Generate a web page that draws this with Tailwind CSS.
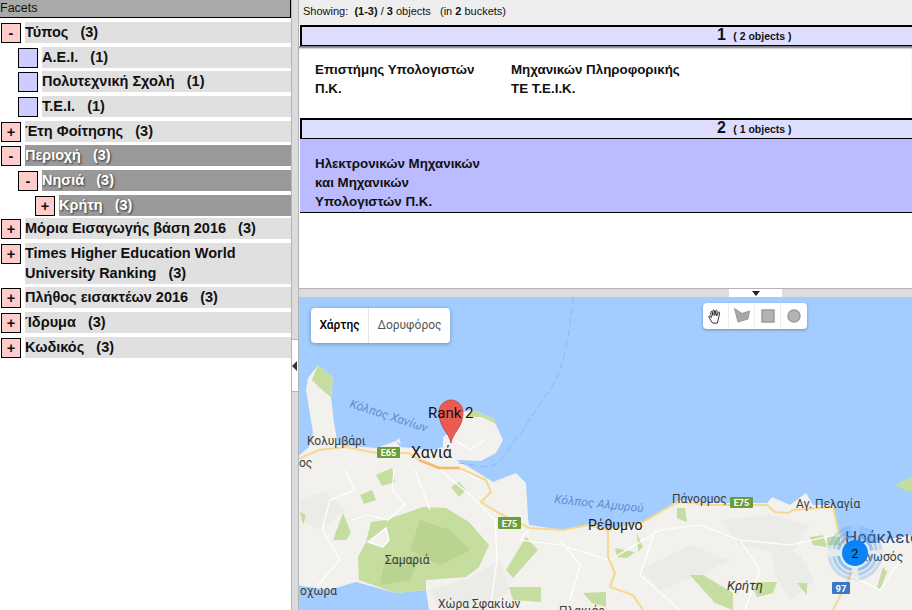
<!DOCTYPE html>
<html lang="en">
<head>
    <meta charset="UTF-8">
    <script src="https://cdn.jsdelivr.net/npm/@tailwindcss/browser@4"></script>
    <title>Facets</title>
</head>
<body class="w-[912px] h-[610px] overflow-hidden flex bg-white font-['Liberation_Sans',Arial,sans-serif] text-black">
    <!-- Facets -->
    <aside class="w-[291px] h-full shrink-0 text-[14.5px] font-bold text-[#111]">
        <div class="h-[18px] bg-[#a9a9a9] border-b border-r border-black text-[12.5px] font-normal leading-[17px]">Facets</div>
        <div class="pt-[4px] flex flex-col gap-[3.7px]">
            <div class="flex h-[21px]">
                <button class="w-[20px] h-[20px] mt-px ml-px border border-black bg-[#ffcccc] leading-[16px]">-</button>
                <div class="ml-[4px] flex-1 bg-[#e0e0e0] leading-[20px] whitespace-pre">Τύπος   (3)</div>
            </div>
            <div class="flex h-[21px] pl-[18px]">
                <span class="w-[20px] h-[20px] mt-px border border-black bg-[#ccccff]"></span>
                <div class="ml-[4px] flex-1 bg-[#e0e0e0] leading-[20px] whitespace-pre">Α.Ε.Ι.   (1)</div>
            </div>
            <div class="flex h-[21px] pl-[18px]">
                <span class="w-[20px] h-[20px] mt-px border border-black bg-[#ccccff]"></span>
                <div class="ml-[4px] flex-1 bg-[#e0e0e0] leading-[20px] whitespace-pre">Πολυτεχνική Σχολή   (1)</div>
            </div>
            <div class="flex h-[21px] pl-[18px]">
                <span class="w-[20px] h-[20px] mt-px border border-black bg-[#ccccff]"></span>
                <div class="ml-[4px] flex-1 bg-[#e0e0e0] leading-[20px] whitespace-pre">Τ.Ε.Ι.   (1)</div>
            </div>
            <div class="flex h-[21px]">
                <button class="w-[20px] h-[20px] mt-px ml-px border border-black bg-[#ffcccc] leading-[16px]">+</button>
                <div class="ml-[4px] flex-1 bg-[#e0e0e0] leading-[20px] whitespace-pre">Έτη Φοίτησης   (3)</div>
            </div>
            <div class="flex h-[21px]">
                <button class="w-[20px] h-[20px] mt-px ml-px border border-black bg-[#ffcccc] leading-[16px]">-</button>
                <div class="ml-[4px] flex-1 bg-[#999999] text-white [text-shadow:1px_1px_2px_#333] leading-[20px] whitespace-pre">Περιοχή   (3)</div>
            </div>
            <div class="flex h-[21px] pl-[18px]">
                <button class="w-[20px] h-[20px] mt-px border border-black bg-[#ffcccc] leading-[16px]">-</button>
                <div class="ml-[4px] flex-1 bg-[#999999] text-white [text-shadow:1px_1px_2px_#333] leading-[20px] whitespace-pre">Νησιά   (3)</div>
            </div>
            <div class="flex h-[21px] pl-[35px]">
                <button class="w-[20px] h-[20px] mt-px border border-black bg-[#ffcccc] leading-[16px]">+</button>
                <div class="ml-[4px] flex-1 bg-[#999999] text-white [text-shadow:1px_1px_2px_#333] leading-[20px] whitespace-pre">Κρήτη   (3)</div>
            </div>
            <div class="flex h-[21px] -mt-[1.5px]">
                <button class="w-[20px] h-[20px] mt-px ml-px border border-black bg-[#ffcccc] leading-[16px]">+</button>
                <div class="ml-[4px] flex-1 bg-[#e0e0e0] leading-[20px] whitespace-pre">Μόρια Εισαγωγής βάση 2016   (3)</div>
            </div>
            <div class="flex h-[41px]">
                <button class="w-[20px] h-[20px] mt-px ml-px border border-black bg-[#ffcccc] leading-[16px]">+</button>
                <div class="ml-[4px] flex-1 bg-[#e0e0e0] leading-[20px]">Times Higher Education World<br><span class="whitespace-pre">University Ranking   (3)</span></div>
            </div>
            <div class="flex h-[21px]">
                <button class="w-[20px] h-[20px] mt-px ml-px border border-black bg-[#ffcccc] leading-[16px]">+</button>
                <div class="ml-[4px] flex-1 bg-[#e0e0e0] leading-[20px] whitespace-pre">Πλήθος εισακτέων 2016   (3)</div>
            </div>
            <div class="flex h-[21px]">
                <button class="w-[20px] h-[20px] mt-px ml-px border border-black bg-[#ffcccc] leading-[16px]">+</button>
                <div class="ml-[4px] flex-1 bg-[#e0e0e0] leading-[20px] whitespace-pre">Ίδρυμα   (3)</div>
            </div>
            <div class="flex h-[21px]">
                <button class="w-[20px] h-[20px] mt-px ml-px border border-black bg-[#ffcccc] leading-[16px]">+</button>
                <div class="ml-[4px] flex-1 bg-[#e0e0e0] leading-[20px] whitespace-pre">Κωδικός   (3)</div>
            </div>
        </div>
    </aside>

    <!-- Splitter -->
    <div class="w-[8px] h-full shrink-0 flex flex-col border-l border-r border-[#b4b4b4]">
        <div class="h-[339px] bg-[#dcdcdc]"></div>
        <div class="h-[53px] bg-white border-y border-[#b4b4b4] flex items-center"><span class="w-0 h-0 border-y-[5px] border-y-transparent border-r-[5px] border-r-[#333]"></span></div>
        <div class="flex-1 bg-[#dcdcdc]"></div>
    </div>

    <main class="flex-1 min-w-0 h-full flex flex-col">
        <!-- Results -->
        <section class="h-[288px] shrink-0 text-[13.33px] font-bold text-[#111] overflow-hidden">
            <div class="h-[25px] bg-[#eeeeee] text-[11px] font-normal leading-[23px] pl-[4px] whitespace-pre">Showing:  <b>(1-3)</b> / <b>3</b> objects   (in <b>2</b> buckets)</div>
            <div class="h-[21px] ml-px bg-[#ddddff] border-2 border-b border-black border-r-0 pl-[415px] leading-[15px] text-[16px]">1 <span class="text-[10.5px] whitespace-pre"> ( 2 objects )</span></div>
            <div class="h-[72px] flex pl-[16px] pt-[15px] leading-[18.5px] shadow-[inset_0_3px_2px_-1px_#777]">
                <div class="w-[196px]">Επιστήμης Υπολογιστών<br>Π.Κ.</div>
                <div>Μηχανικών Πληροφορικής<br>ΤΕ Τ.Ε.Ι.Κ.</div>
            </div>
            <div class="h-[21px] ml-px bg-[#ddddff] border-2 border-b border-black border-r-0 pl-[415px] leading-[15px] text-[16px]">2 <span class="text-[10.5px] whitespace-pre"> ( 1 objects )</span></div>
            <div class="h-[74px] ml-px bg-[#bbbbff] border-b border-black pl-[15px] pt-[15px] leading-[19px]">Ηλεκτρονικών Μηχανικών<br>και Μηχανικών<br>Υπολογιστών Π.Κ.</div>
        </section>

        <!-- Horizontal splitter -->
        <div class="relative h-[9px] shrink-0 bg-[#dcdcdc] border-t border-[#b4b4b4]">
            <div class="absolute left-[430px] top-0 w-[53px] h-[8px] bg-white flex justify-center"><span class="w-0 h-0 mt-[2px] border-x-[4px] border-x-transparent border-t-[5px] border-t-[#222]"></span></div>
        </div>

        <!-- Map -->
        <div class="relative flex-1 overflow-hidden bg-[#a3ccff]">
            <svg class="absolute inset-0" width="613" height="313" viewBox="299 297 613 313" font-family="Roboto, sans-serif">
                <!-- land -->
                <path fill="#f2f1ed" d="M296 458 L309 447 L313 433 L306 390 L308 378 L318 365 L333 378 L331 397 L334 423 L338 445 L376 448 L396 441 L400 447 L432 450 L443 447 L443 437 L453 430 L459 420 L463 412 L473 410 L493 418 L503 440 L496 453 L481 461 L456 460 L469 467 L493 482 L516 473 L526 483 L528 517 L529 525 L563 530 L589 525 L608 530 L643 522 L667 508 L680 500 L713 503 L767 503 L772 497 L790 505 L806 493 L813 505 L833 505 L838 530 L845 540 L867 543 L912 535 L912 610 L429 610 L426 590 L396 593 L356 582 L329 590 L296 585 Z"/>
                <path fill="#f2f1ed" d="M396 441 L399 438 L401 444 Z"/>
                <path fill="#c5dd9e" d="M895 485 L912 477 L912 492 L904 490 Z"/>
                <!-- terrain -->
                <g fill="#ebebe8">
                    <path d="M300 500 L325 490 L345 510 L320 530 L300 520 Z"/>
                    <path d="M430 590 L470 578 L500 560 L510 590 L480 610 L440 610 Z"/>
                    <path d="M720 520 L770 515 L810 525 L790 555 L740 545 Z"/>
                    <path d="M640 570 L690 545 L730 560 L700 575 L660 590 Z"/>
                    <path d="M770 540 L800 555 L815 580 L790 600 L775 575 Z"/>
                </g>
                <!-- parks -->
                <g fill="#c5dd9e">
                    <path d="M318 365 L333 378 L331 397 L322 390 L312 380 Z"/>
                    <path d="M473 410 L493 418 L498 425 L482 417 L468 417 Z"/>
                    <path d="M366 542 L371 522 L386 520 L423 507 L446 508 L469 522 L489 545 L479 567 L466 577 L426 580 L426 590 L396 593 L359 580 L358 557 Z"/>
                    <path d="M451 487 L459 482 L466 490 L459 497 Z"/>
                    <path d="M333 540 L343 513 L351 533 L346 540 Z"/>
                    <path d="M506 570 L526 537 L538 550 L513 578 Z"/>
                    <path d="M509 587 L541 587 L541 602 L513 600 Z"/>
                    <path d="M583 593 L606 592 L606 607 L592 603 Z"/>
                    <path d="M615 548 L635 552 L627 558 L617 557 Z"/>
                    <path d="M637 533 L643 547 L638 552 Z"/>
                    <path d="M677 508 L685 508 L687 522 L677 518 Z"/>
                    <path d="M690 575 L703 575 L733 593 L733 610 L715 603 Z"/>
                    <path d="M750 582 L777 582 L773 593 L757 597 Z"/>
                    <path d="M797 583 L807 583 L807 595 Z"/>
                    <path d="M810 537 L823 535 L827 547 L813 545 Z"/>
                    <path d="M827 536 L840 537 L840 545 L827 545 Z"/>
                    <path d="M883 567 L877 587 L880 590 L887 572 Z"/>
                    <path d="M300 512 L306 515 L303 525 Z"/>
                    <path d="M376 475 L392 468 L395 482 L382 486 Z"/>
                    <path d="M360 495 L372 490 L376 500 L364 504 Z"/>
                </g>
                <g fill="#b8d48e">
                    <path d="M420 520 L450 530 L470 550 L440 565 L410 550 Z"/>
                    <path d="M385 560 L420 555 L410 580 L380 585 Z"/>
                </g>
                <path fill="#f2f1ed" stroke="#fff" stroke-width="1.5" d="M368 542 L386 528 L389 540 L383 547 Z"/>
                <!-- roads -->
                <g fill="none" stroke="#fff" stroke-width="1.2">
                    <path d="M394 470 L392 490 L405 505 L388 520 L368 515 L352 520"/>
                    <path d="M345 470 L355 490 L330 500 L322 530 L340 560 L318 585"/>
                    <path d="M440 470 L470 495 L495 520 L497 560 L490 610"/>
                    <path d="M530 528 L520 540 L560 545 L610 560 L660 530 L700 525 L740 540 L790 545 L835 535"/>
                    <path d="M560 540 L580 565 L570 600"/>
                    <path d="M655 530 L640 575 L680 610"/>
                    <path d="M740 540 L760 570 L745 610"/>
                    <path d="M850 575 L880 590 L900 560"/>
                    <path d="M480 480 L460 470 M415 470 L430 510 M455 440 L470 450 L485 440"/>
                </g>
                <g fill="none" stroke="#f6d98e" stroke-width="2">
                    <path d="M296 460 L319 450 L346 447 L376 453 L409 453 L419 460"/>
                    <path d="M459 468 L486 480 L491 492 L481 502 L499 513 L529 528 L563 530 L589 525 L608 530 L643 522 L667 508 L678 502 L713 505 L767 505 L775 512 L788 513 L793 510 L833 507 L838 530 L845 545"/>
                    <path d="M608 530 L608 557 L615 573 L610 587 L633 595 L643 610"/>
                    <path d="M852 572 L833 610"/>
                </g>
                <path fill="none" stroke="#f3b968" stroke-width="2.5" d="M419 460 L439 468 L459 468"/>
                <path fill="none" stroke="#8ab8f7" stroke-width="1" stroke-dasharray="7 4" d="M573 297 C570 330 565 360 556 380 L523 430 L503 457 Q495 467 486 467 L459 463"/>
                <!-- shields -->
                <rect x="377" y="447" width="23" height="11" rx="1" fill="#6a9e3d"/>
                <text x="388.5" y="456" text-anchor="middle" font-size="9" font-weight="700" fill="#fff">E65</text>
                <rect x="498" y="517" width="23" height="12" rx="1" fill="#6a9e3d"/>
                <text x="509.5" y="526.5" text-anchor="middle" font-size="9" font-weight="700" fill="#fff">E75</text>
                <rect x="730" y="497" width="23" height="11" rx="1" fill="#6a9e3d"/>
                <text x="741.5" y="506" text-anchor="middle" font-size="9" font-weight="700" fill="#fff">E75</text>
                <rect x="832" y="582" width="18" height="12" rx="1" fill="#3b78c4"/>
                <text x="841" y="592" text-anchor="middle" font-size="9.5" font-weight="700" fill="#fff">97</text>
                <!-- labels -->
                <g fill="#3d3d3d" font-size="12">
                    <text x="307" y="445">Κολυμβάρι</text>
                    <text x="299" y="467">ος</text>
                    <text x="385" y="564">Σαμαριά</text>
                    <text x="438" y="608">Χώρα Σφακίων</text>
                    <text x="559" y="615">Πλακιάς</text>
                    <text x="672" y="503">Πάνορμος</text>
                    <text x="796" y="508">Αγ. Πελαγία</text>
                    <text x="860" y="561">Κνωσός</text>
                    <text x="300" y="595">οχωρα</text>
                </g>
                <text x="411" y="458" fill="#222" font-size="16">Χανιά</text>
                <text x="588" y="530" fill="#222" font-size="14">Ρέθυμνο</text>
                <text x="845" y="543" fill="#27456e" font-size="17">Ηράκλειο</text>
                <text x="727" y="590" fill="#333" font-size="13" font-style="italic">Κρήτη</text>
                <g fill="#5b8ed1" font-size="12" font-style="italic">
                    <text x="349" y="407" transform="rotate(18 349 407)">Κόλπος Χανίων</text>
                    <text x="554" y="503" transform="rotate(6 554 503)">Κόλπος Αλμυρού</text>
                </g>
                <!-- pin -->
                <path fill="#ec5a50" stroke="#b73a32" stroke-width="0.7" d="M451 443 C449 432 439 428 439 412 C439 405 445 400 451 400 C457 400 463 405 463 412 C463 428 453 432 451 443 Z"/>
                <text x="428" y="418" font-size="15" fill="#111">Rank 2</text>
                <!-- cluster -->
                <circle cx="855" cy="553" r="28" fill="#4a9bf2" fill-opacity="0.08"/>
                <g fill="none" stroke="#4a9bf2" stroke-width="3">
                    <circle cx="855" cy="553" r="26" stroke-opacity="0.2" stroke-dasharray="32 8.8" stroke-dashoffset="-4.4"/>
                    <circle cx="855" cy="553" r="21.5" stroke-opacity="0.35" stroke-dasharray="26 7.8" stroke-dashoffset="-3.9"/>
                    <circle cx="855" cy="553" r="17" stroke-opacity="0.55" stroke-dasharray="20 6.7" stroke-dashoffset="-3.3"/>
                </g>
                <circle cx="855" cy="553" r="13" fill="#0a84f5"/>
                <text x="855" y="558" text-anchor="middle" font-size="13" fill="#111">2</text>
            </svg>

            <!-- map type -->
            <div class="absolute left-[12px] top-[11px] h-[35px] flex bg-white rounded-sm shadow-[0_1px_4px_rgba(0,0,0,0.3)] text-[12px] font-['Roboto',sans-serif] leading-[35px]">
                <div class="w-[58px] text-center font-medium text-black border-r border-[#e6e6e6]">Χάρτης</div>
                <div class="w-[81px] text-center text-[#565656]">Δορυφόρος</div>
            </div>

            <!-- drawing tools -->
            <div class="absolute left-[404px] top-[6px] h-[26px] flex bg-white rounded-sm shadow-[0_1px_3px_rgba(0,0,0,0.3)]">
                <div class="w-[26px] flex items-center justify-center border-r border-[#eee]">
                    <svg width="17" height="17" viewBox="0 0 18 18" fill="#fff" stroke="#111" stroke-width="0.9"><path d="M5 15 L2 9.5 C1.6 8.6 2.8 8 3.4 8.8 L4.6 10.2 L4 4.5 C3.9 3.5 5.3 3.3 5.5 4.3 L6.3 8 L6.3 2.8 C6.3 1.8 7.8 1.8 7.9 2.8 L8.3 7.8 L9.2 3 C9.4 2 10.8 2.3 10.7 3.3 L10.2 8.4 L12 4.6 C12.4 3.7 13.7 4.2 13.4 5.2 L12.4 10 C12 12 11.5 13.5 11 16 L6.5 16 Z"/></svg>
                </div>
                <div class="w-[26px] flex items-center justify-center border-r border-[#eee]">
                    <svg width="18" height="18" viewBox="0 0 18 18"><path d="M1.5 1.5 L9 6.5 L16.5 4 L15 12 L5 15 Z" fill="#a8a8a8" stroke="#999"/></svg>
                </div>
                <div class="w-[26px] flex items-center justify-center border-r border-[#eee]">
                    <svg width="16" height="16" viewBox="0 0 16 16"><rect x="2" y="2" width="12" height="12" fill="#b4b4b4" stroke="#999" stroke-width="1.5"/></svg>
                </div>
                <div class="w-[26px] flex items-center justify-center">
                    <svg width="16" height="16" viewBox="0 0 16 16"><circle cx="8" cy="8" r="6" fill="#b4b4b4" stroke="#999" stroke-width="1.5"/></svg>
                </div>
            </div>
        </div>
    </main>
</body>
</html>
